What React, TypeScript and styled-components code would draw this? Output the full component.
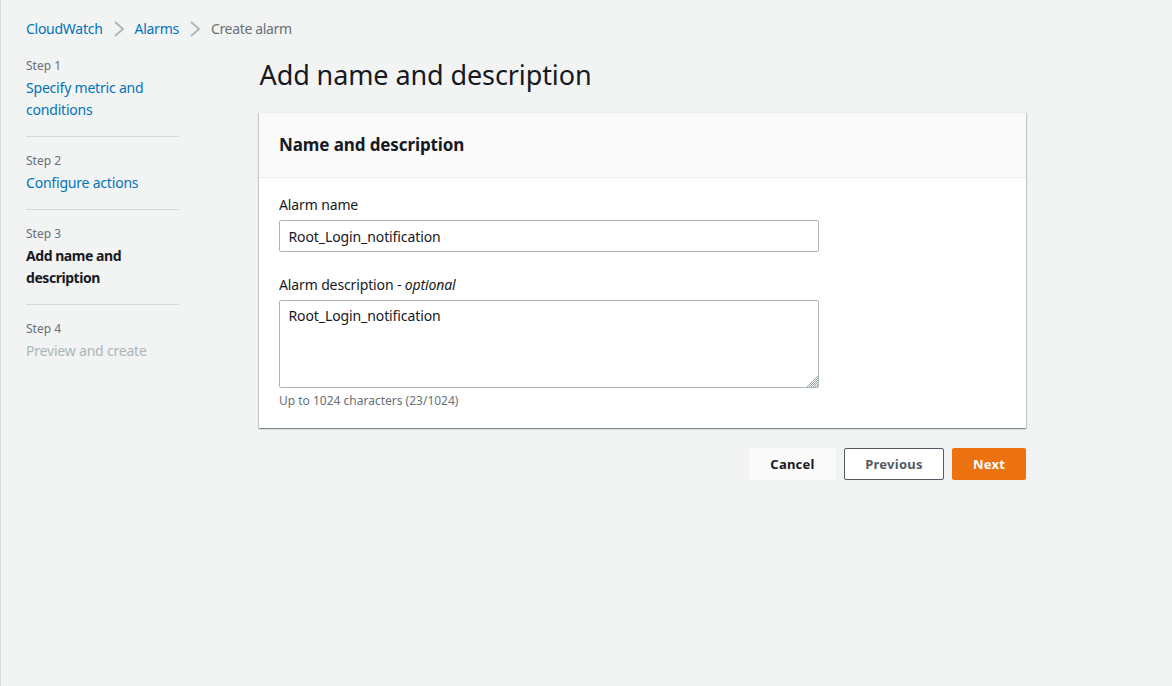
import styled, { createGlobalStyle } from 'styled-components';

const steps = [
  { step: 'Step 1', label: 'Specify metric and conditions', state: 'link' },
  { step: 'Step 2', label: 'Configure actions', state: 'link' },
  { step: 'Step 3', label: 'Add name and description', state: 'active' },
  { step: 'Step 4', label: 'Preview and create', state: 'disabled' },
];

const GlobalStyle = createGlobalStyle`
  html, body {
    margin: 0;
    height: 100%;
    background: #f2f3f3;
    overflow: hidden;
  }
  body {
    font-family: "Noto Sans", "Liberation Sans", sans-serif;
    font-size: 14px;
    line-height: 22px;
    letter-spacing: -0.2px;
    color: #16191f;
  }
  * { box-sizing: border-box; }
`;

const App = () => (
  <Page>
    <GlobalStyle />
    <Breadcrumbs>
      <Crumb href="#">CloudWatch</Crumb>
      <Chevron />
      <Crumb href="#">Alarms</Crumb>
      <Chevron />
      <Current>Create alarm</Current>
    </Breadcrumbs>
    <Columns>
      <Nav>
        {steps.map(s => (
          <NavItem key={s.step}>
            <StepNo>{s.step}</StepNo>
            <StepLabel $state={s.state}>{s.label}</StepLabel>
          </NavItem>
        ))}
      </Nav>
      <Main>
        <Title>Add name and description</Title>
        <Card>
          <CardHeader>Name and description</CardHeader>
          <CardBody>
            <Field>
              <Label>Alarm name</Label>
              <Input defaultValue="Root_Login_notification" />
            </Field>
            <Field>
              <Label>
                Alarm description - <em>optional</em>
              </Label>
              <TextAreaWrap>
                <TextArea defaultValue="Root_Login_notification" />
                <Grip viewBox="0 0 11 11" aria-hidden="true">
                  <path
                    d="M0 11 11 0M2 11 11 2M4 11 11 4M6 11 11 6M8 11 11 8M10 11 11 10"
                    stroke="#879596"
                    strokeWidth="0.9"
                    fill="none"
                  />
                </Grip>
              </TextAreaWrap>
              <Hint>Up to 1024 characters (23/1024)</Hint>
            </Field>
          </CardBody>
        </Card>
        <Actions>
          <CancelButton>Cancel</CancelButton>
          <PreviousButton>Previous</PreviousButton>
          <NextButton>Next</NextButton>
        </Actions>
      </Main>
    </Columns>
  </Page>
);

const Chevron = () => (
  <ChevronIcon viewBox="0 0 16 16" aria-hidden="true">
    <path d="M4 1 12 8 4 15" fill="none" stroke="#aab7b8" strokeWidth="1.8" />
  </ChevronIcon>
);

export default App;

const Page = styled.div`
  height: 686px;
  border-left: 1px solid #d5dbdb;
  padding: 18px 0 0 25px;
`;

const Breadcrumbs = styled.nav`
  display: flex;
  align-items: center;
  height: 22px;
`;

const Crumb = styled.a`
  color: #0073bb;
  text-decoration: none;
  letter-spacing: -0.27px;
`;

const Current = styled.span`
  color: #687078;
  letter-spacing: -0.33px;
`;

const ChevronIcon = styled.svg`
  width: 16px;
  height: 16px;
  margin: 0 8px;
`;

const Columns = styled.div`
  display: flex;
  margin-top: 15px;
`;

const Nav = styled.aside`
  width: 153px;
  flex: none;
`;

const NavItem = styled.div`
  padding-bottom: 15px;
  margin-bottom: 13px;
  border-bottom: 1px solid #d5dbdb;

  &:last-child {
    border-bottom: none;
  }
`;

const StepNo = styled.div`
  font-size: 12px;
  line-height: 22px;
  letter-spacing: 0;
  color: #687078;
`;

const StepLabel = styled.div<{ $state: string }>`
  color: ${({ $state }) =>
    $state === 'link' ? '#0073bb' : $state === 'active' ? '#16191f' : '#aab7b8'};
  font-weight: ${({ $state }) => ($state === 'active' ? 700 : 400)};
  letter-spacing: ${({ $state }) => ($state === 'active' ? '-0.45px' : '-0.2px')};
`;

const Main = styled.main`
  width: 767px;
  margin-left: 80px;
  margin-top: 2px;
`;

const Title = styled.h1`
  margin: 0 0 19px;
  padding-left: 0.5px;
  font-size: 27px;
  line-height: 36px;
  font-weight: 400;
  letter-spacing: -0.1px;
`;

const Card = styled.section`
  background: #fff;
  border-top: 1px solid #eaeded;
  box-shadow: 0 1px 1px 0 rgba(0, 28, 36, 0.3), 1px 1px 1px 0 rgba(0, 28, 36, 0.15),
    -1px 1px 1px 0 rgba(0, 28, 36, 0.15);
`;

const CardHeader = styled.h2`
  margin: 0;
  height: 65px;
  padding: 0 20px;
  display: flex;
  align-items: center;
  background: #fafafa;
  border-bottom: 1px solid #eaeded;
  font-size: 17px;
  font-weight: 700;
  letter-spacing: -0.1px;
`;

const CardBody = styled.div`
  padding: 16px 20px;
`;

const Field = styled.div`
  width: 540px;
  margin-bottom: 22px;

  &:last-child {
    margin-bottom: 0;
  }
`;

const Label = styled.div`
  margin-bottom: 4px;
  letter-spacing: -0.13px;
`;

const Input = styled.input`
  display: block;
  width: 100%;
  height: 32px;
  padding: 0 8.5px;
  border: 1px solid #aab7b8;
  border-radius: 2px;
  background: #fff;
  color: #16191f;
  font: inherit;
  letter-spacing: -0.1px;
`;

const TextAreaWrap = styled.div`
  position: relative;
`;

const TextArea = styled.textarea`
  display: block;
  width: 100%;
  height: 88px;
  padding: 4px 8.5px;
  border: 1px solid #aab7b8;
  border-radius: 2px;
  background: #fff;
  color: #16191f;
  font: inherit;
  letter-spacing: -0.1px;
  resize: none;
`;

const Grip = styled.svg`
  position: absolute;
  right: 1px;
  bottom: 1px;
  width: 11px;
  height: 11px;
`;

const Hint = styled.div`
  margin-top: 2px;
  font-size: 12px;
  line-height: 22px;
  letter-spacing: 0;
  color: #687078;
`;

const Actions = styled.div`
  display: flex;
  justify-content: flex-end;
  gap: 8px;
  margin-top: 20px;
`;

const BaseButton = styled.button`
  height: 32px;
  border-radius: 2px;
  border: 1px solid transparent;
  font: inherit;
  font-size: 13px;
  font-weight: 700;
  letter-spacing: 0.25px;
`;

const CancelButton = styled(BaseButton)`
  width: 87px;
  background: #fafafa;
  color: #16191f;
`;

const PreviousButton = styled(BaseButton)`
  width: 100px;
  background: #fff;
  border-color: #545b64;
  color: #545b64;
`;

const NextButton = styled(BaseButton)`
  width: 74px;
  background: #ec7211;
  color: #fff;
`;
